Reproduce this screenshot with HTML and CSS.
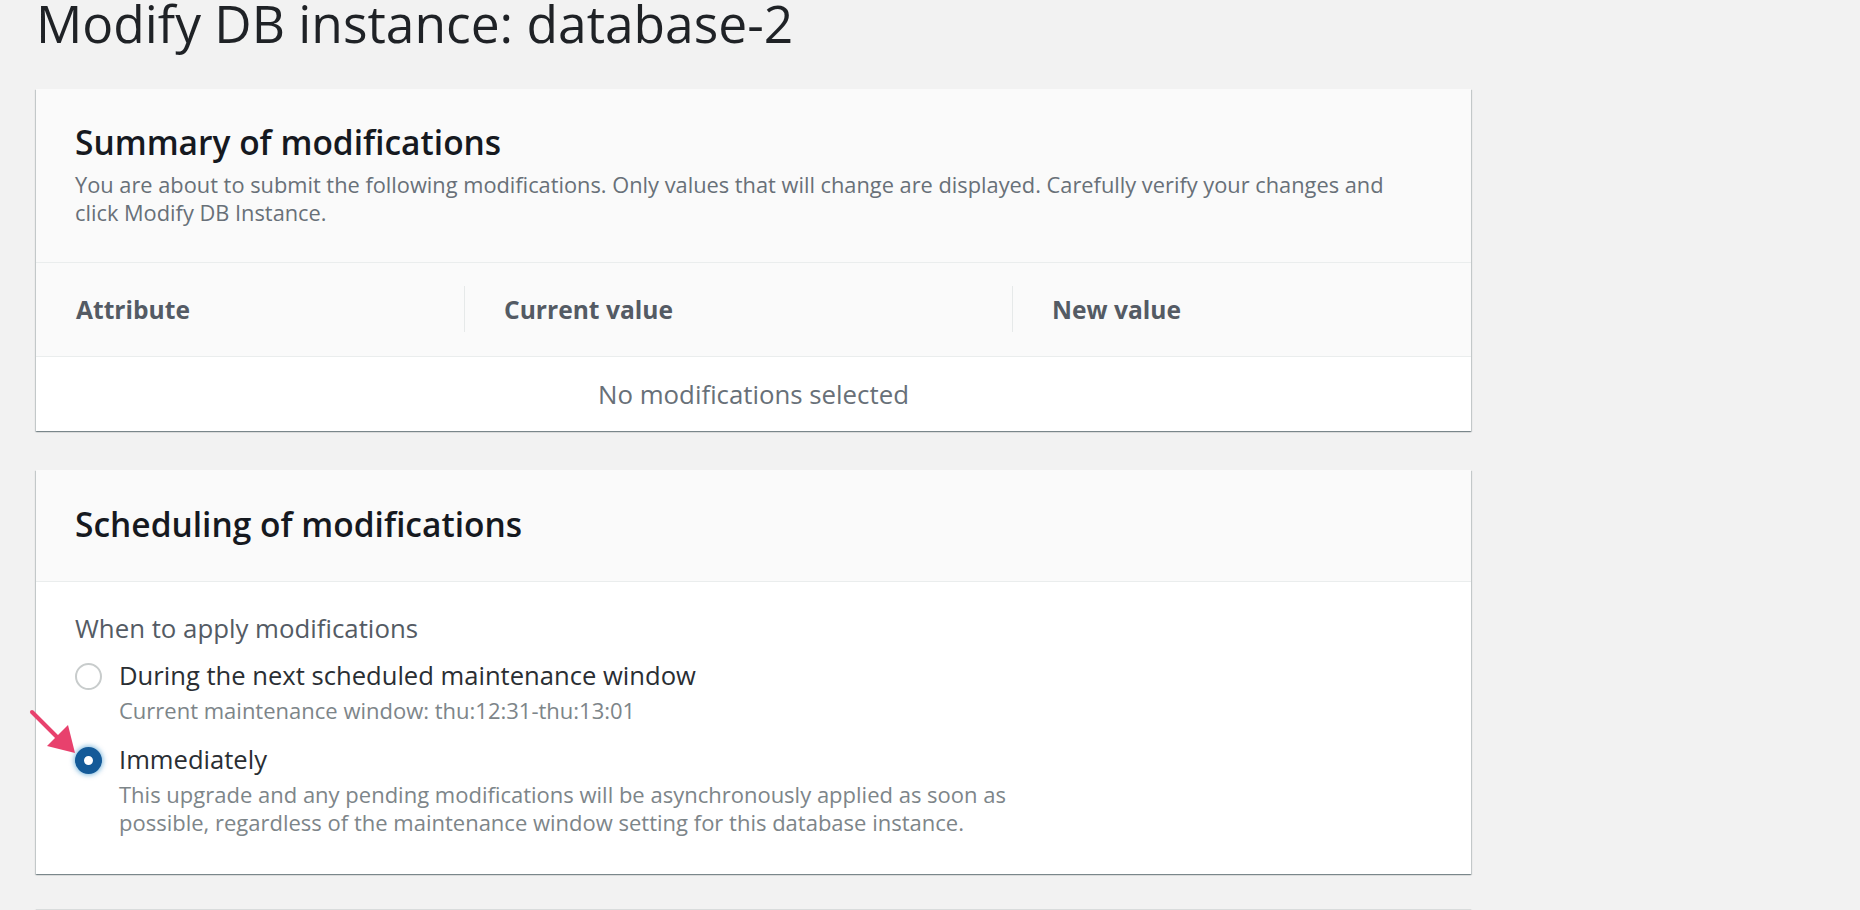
FILE: index.html
```html
<!DOCTYPE html>
<html lang="en">
<head>
<meta charset="utf-8">
<title>Modify DB instance: database-2</title>
<link rel="stylesheet" href="styles.css">
</head>
<body>
<div class="page">
  <h1 class="title">Modify DB instance: database-2</h1>

  <section class="card">
    <header class="card-header">
      <h2 class="card-title">Summary of modifications</h2>
      <p class="card-desc">You are about to submit the following modifications. Only values that will change are displayed. Carefully verify your changes and click Modify DB Instance.</p>
    </header>
    <div class="table">
      <div class="thead">
        <div class="th th-attr"><span>Attribute</span></div>
        <div class="th th-cur"><span>Current value</span></div>
        <div class="th th-new"><span>New value</span></div>
      </div>
      <div class="empty-row">No modifications selected</div>
    </div>
  </section>

  <section class="card">
    <header class="card-header card-header-plain">
      <h2 class="card-title">Scheduling of modifications</h2>
    </header>
    <div class="card-body">
      <div class="field-label">When to apply modifications</div>
      <div class="radio-group">
        <label class="radio-item">
          <span class="radio"></span>
          <span class="radio-text">
            <span class="radio-label">During the next scheduled maintenance window</span>
            <span class="radio-desc">Current maintenance window: thu:12:31-thu:13:01</span>
          </span>
        </label>
        <label class="radio-item">
          <span class="radio radio-checked"></span>
          <span class="radio-text">
            <span class="radio-label">Immediately</span>
            <span class="radio-desc radio-desc-wide">This upgrade and any pending modifications will be asynchronously applied as soon as possible, regardless of the maintenance window setting for this database instance.</span>
          </span>
        </label>
      </div>
    </div>
  </section>

  <section class="card card-next">
    <header class="card-header card-header-plain"></header>
  </section>

  <svg class="pointer" width="60" height="60" viewBox="0 0 60 60" aria-hidden="true">
    <line x1="4" y1="4" x2="30" y2="30" stroke="#e8416d" stroke-width="4" stroke-linecap="round"/>
    <polygon points="47,45 19,38 40,17" fill="#e8416d"/>
  </svg>
</div>
</body>
</html>
```

FILE: styles.css
```css
* { box-sizing: border-box; }

html, body {
  margin: 0;
  padding: 0;
  background: #f2f2f2;
  overflow: hidden;
}

body {
  font-family: "Open Sans", "Noto Sans", Arial, sans-serif;
  color: #16191f;
}

.page {
  position: relative;
  width: 1860px;
  height: 910px;
  overflow: hidden;
  padding-left: 36px;
}

.title {
  margin: 0 0 42px 0;
  font-size: 51.5px;
  line-height: 47px;
  font-weight: 400;
  color: #1f2226;
}

.card {
  width: 1435px;
  background: #fff;
  box-shadow: 0 1px 1px 0 rgba(0, 28, 36, 0.3), 1px 1px 1px 0 rgba(0, 28, 36, 0.15), -1px 1px 1px 0 rgba(0, 28, 36, 0.15);
  margin-bottom: 39px;
}

.card-header {
  background: #fafafa;
  border-bottom: 1px solid #eaeded;
  padding: 33px 39px 35px 39px;
}

.card-header-plain {
  padding: 34px 39px 37px 39px;
}

.card-title {
  margin: 0;
  font-size: 33.5px;
  line-height: 40px;
  font-weight: 600;
  color: #16191f;
}

.card-desc {
  margin: 9px 0 0 0;
  font-size: 21.8px;
  line-height: 28px;
  color: #687078;
}

.thead {
  display: grid;
  grid-template-columns: 428px 548px 1fr;
  height: 94px;
  background: #fafafa;
  border-bottom: 1px solid #eaeded;
}

.th {
  display: flex;
  align-items: center;
  padding-left: 40px;
  font-size: 24.6px;
  font-weight: 700;
  color: #545b64;
  position: relative;
}

.th-cur::before, .th-new::before {
  content: "";
  position: absolute;
  left: 0;
  top: 23px;
  bottom: 24px;
  width: 1px;
  background: #e6e9e9;
}

.empty-row {
  height: 74px;
  display: flex;
  align-items: center;
  justify-content: center;
  font-size: 25.8px;
  color: #687078;
}

.card-body {
  padding: 26px 39px 38px 39px;
}

.field-label {
  font-size: 25.8px;
  line-height: 40px;
  color: #545b64;
}

.radio-group {
  display: flex;
  flex-direction: column;
  gap: 16px;
  margin-top: 8px;
}

.radio-item {
  display: flex;
  align-items: flex-start;
  gap: 17px;
}

.radio {
  flex: none;
  width: 27px;
  height: 27px;
  border-radius: 50%;
  border: 2px solid #c8cccc;
  background: #fff;
  margin-top: 7px;
}

.radio-checked {
  border: 9px solid #145a98;
  box-shadow: 0 0 5px 1px rgba(0, 115, 187, 0.5);
}

.radio-text {
  display: flex;
  flex-direction: column;
}

.radio-label {
  font-size: 25.6px;
  line-height: 40px;
  color: #2a2e33;
}

.radio-desc {
  font-size: 22px;
  line-height: 28px;
  color: #7d8589;
}

.radio-desc-wide {
  max-width: 940px;
}

.card-next {
  height: 60px;
  margin-top: -4px;
  border-top: 1px solid #d9dcdc;
}

.pointer {
  position: absolute;
  left: 28px;
  top: 708px;
}
```
